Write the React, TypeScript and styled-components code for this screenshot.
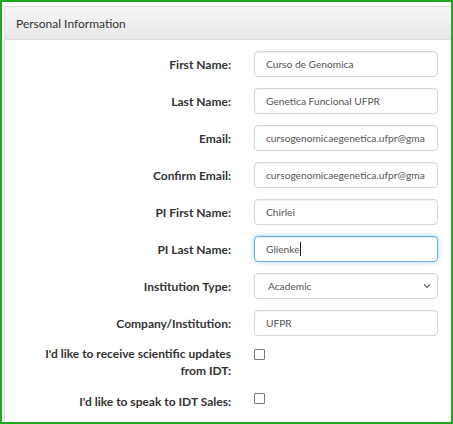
import React from "react";
import styled, { createGlobalStyle } from "styled-components";

const Global = createGlobalStyle`
  html, body { margin: 0; padding: 0; background: #fff; }
  body { font-family: Lato, "Open Sans", sans-serif; }
  * { box-sizing: border-box; }
`;

const Frame = styled.div`
  width: 453px;
  height: 424px;
  border: 2px solid #22a722;
  padding: 4px 0 0 2px;
  overflow: hidden;
`;

const Panel = styled.section`
  width: 470px;
  border: 1px solid #dcdcdc;
  border-right: none;
  border-radius: 4px 0 0 0;
  background: #fff;
`;

const PanelHeading = styled.header`
  height: 33px;
  display: flex;
  align-items: center;
  padding: 1px 11px 0;
  background: linear-gradient(#f6f6f6, #e8e8e8);
  border-bottom: 1px solid #dcdcdc;
  border-radius: 4px 0 0 0;
  color: #333;
  font-size: 12px;
`;

const PanelBody = styled.div`
  display: grid;
  grid-template-columns: 226px 184px;
  column-gap: 23px;
  row-gap: 11px;
  padding: 11px 0 20px;
`;

const Label = styled.label<{ $top?: number }>`
  justify-self: end;
  text-align: right;
  font-weight: 700;
  font-size: 12px;
  line-height: 17px;
  color: #333;
  align-self: ${(p) => (p.$top !== undefined ? "start" : "center")};
  margin-top: ${(p) => p.$top ?? 0}px;
`;

const Field = styled.div<{ $focused?: boolean }>`
  height: 26px;
  display: flex;
  align-items: center;
  padding: 0 11px;
  border: 1px solid ${(p) => (p.$focused ? "#66afe9" : "#d6d6d6")};
  border-radius: 4px;
  box-shadow: ${(p) =>
    p.$focused
      ? "inset 0 1px 1px rgba(0,0,0,.075), 0 0 5px rgba(102,175,233,.6)"
      : "inset 0 1px 1px rgba(0,0,0,.05)"};
  font-size: 10.2px;
  color: #555;
  background: #fff;
`;

const Value = styled.span<{ $misspelled?: boolean }>`
  display: block;
  min-width: 0;
  overflow: hidden;
  white-space: nowrap;
  text-decoration: ${(p) => (p.$misspelled ? "underline wavy #e03030" : "none")};
  text-decoration-thickness: 1px;
  text-underline-offset: 2px;
`;

const Caret = styled.span`
  display: inline-block;
  width: 1px;
  height: 14px;
  background: #222;
`;

const SelectBox = styled(Field)`
  justify-content: space-between;
  padding: 0 6px 0 13px;
`;

const CheckSlot = styled.div<{ $top: number }>`
  align-self: start;
  margin-top: ${(p) => p.$top}px;
`;

const Check = styled.span`
  display: block;
  width: 11px;
  height: 11px;
  border: 1px solid #7a7a7a;
  border-radius: 1px;
  background: #fff;
`;

const rows: [string, string][] = [
  ["First Name:", "Curso de Genomica"],
  ["Last Name:", "Genetica Funcional UFPR"],
  ["Email:", "cursogenomicaegenetica.ufpr@gma"],
  ["Confirm Email:", "cursogenomicaegenetica.ufpr@gma"],
  ["PI First Name:", "Chirlei"],
];

export default function App() {
  return (
    <>
      <Global />
      <Frame>
        <Panel>
          <PanelHeading>Personal Information</PanelHeading>
          <PanelBody>
            {rows.map(([l, v]) => (
              <React.Fragment key={l}>
                <Label>{l}</Label>
                <Field>
                  <Value>{v}</Value>
                </Field>
              </React.Fragment>
            ))}
            <Label>PI Last Name:</Label>
            <Field $focused>
              <Value $misspelled>Glienke</Value>
              <Caret />
            </Field>
            <Label>Institution Type:</Label>
            <SelectBox>
              <span>Academic</span>
              <svg width="8" height="6" viewBox="0 0 8 6">
                <polyline points="1,1.5 4,4.5 7,1.5" fill="none" stroke="#666" strokeWidth="1.2" />
              </svg>
            </SelectBox>
            <Label>Company/Institution:</Label>
            <Field>
              <Value>UFPR</Value>
            </Field>
            <Label $top={-2}>
              I'd like to receive scientific updates
              <br />
              from IDT:
            </Label>
            <CheckSlot $top={2}>
              <Check />
            </CheckSlot>
            <Label $top={3}>I'd like to speak to IDT Sales:</Label>
            <CheckSlot $top={3}>
              <Check />
            </CheckSlot>
          </PanelBody>
        </Panel>
      </Frame>
    </>
  );
}
